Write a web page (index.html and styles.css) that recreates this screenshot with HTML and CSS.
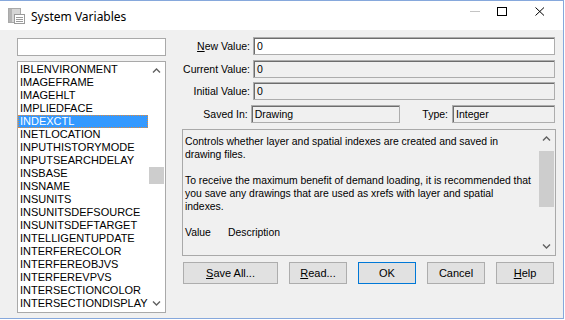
FILE: index.html
```html
<!DOCTYPE html>
<html lang="en">
<head>
  <meta charset="UTF-8" />
  <title>System Variables</title>
  <link rel="stylesheet" href="styles.css">
</head>
<body>
  <div class="window">
    <div class="titlebar">
      <svg class="app-icon" width="17" height="16" viewBox="0 0 17 16">
        <rect x="0.5" y="0.5" width="12" height="14" fill="#d6d6d6" stroke="#a9a9a9"/>
        <rect x="1" y="1" width="3" height="13" fill="#b4b4b4"/>
        <rect x="6.5" y="6.5" width="10" height="9" fill="#ffffff" stroke="#9a9a9a"/>
        <line x1="8" y1="9.5" x2="15" y2="9.5" stroke="#9a9a9a"/>
        <line x1="8" y1="11.5" x2="15" y2="11.5" stroke="#9a9a9a"/>
        <line x1="8" y1="13.5" x2="15" y2="13.5" stroke="#9a9a9a"/>
      </svg>
      <span class="title">System Variables</span>
      <div class="caption">
        <svg class="cap min" width="10" height="9" viewBox="0 0 10 9"><line x1="0" y1="4.5" x2="10" y2="4.5" stroke="#c4c4c4"/></svg>
        <svg class="cap max" width="10" height="9" viewBox="0 0 10 9"><rect x="0.5" y="0.5" width="9" height="8" fill="none" stroke="#000"/></svg>
        <svg class="cap close" width="10" height="9" viewBox="0 0 10 9"><path d="M0.5 0.5 L9 8.5 M9 0.5 L0.5 8.5" stroke="#000" fill="none"/></svg>
      </div>
    </div>

    <div class="dialog">
      <div class="left-col">
        <div class="search"></div>
        <div class="listbox">
          <ul class="items">
            <li>IBLENVIRONMENT</li>
            <li>IMAGEFRAME</li>
            <li>IMAGEHLT</li>
            <li>IMPLIEDFACE</li>
            <li class="selected">INDEXCTL</li>
            <li>INETLOCATION</li>
            <li>INPUTHISTORYMODE</li>
            <li>INPUTSEARCHDELAY</li>
            <li>INSBASE</li>
            <li>INSNAME</li>
            <li>INSUNITS</li>
            <li>INSUNITSDEFSOURCE</li>
            <li>INSUNITSDEFTARGET</li>
            <li>INTELLIGENTUPDATE</li>
            <li>INTERFERECOLOR</li>
            <li>INTERFEREOBJVS</li>
            <li>INTERFEREVPVS</li>
            <li>INTERSECTIONCOLOR</li>
            <li>INTERSECTIONDISPLAY</li>
          </ul>
          <div class="vscroll list-scroll">
            <div class="arrow"><svg width="9" height="5" viewBox="0 0 9 5"><path d="M1 4.5 L4.5 1 L8 4.5" stroke="#606060" stroke-width="1.4" fill="none"/></svg></div>
            <div class="track"><div class="thumb"></div></div>
            <div class="arrow"><svg width="9" height="5" viewBox="0 0 9 5"><path d="M1 0.5 L4.5 4 L8 0.5" stroke="#606060" stroke-width="1.4" fill="none"/></svg></div>
          </div>
        </div>
      </div>

      <div class="right-col">
        <div class="field-row">
          <span class="lbl"><u>N</u>ew Value:</span>
          <div class="edit editable">0</div>
        </div>
        <div class="field-row">
          <span class="lbl">Current Value:</span>
          <div class="edit">0</div>
        </div>
        <div class="field-row">
          <span class="lbl">Initial Value:</span>
          <div class="edit">0</div>
        </div>
        <div class="field-row">
          <span class="lbl">Saved In:</span>
          <div class="edit saved-in">Drawing</div>
          <span class="type-lbl">Type:</span>
          <div class="edit type-box">Integer</div>
        </div>

        <div class="desc">
          <div class="desc-text">
            <p>Controls whether layer and spatial indexes are created and saved in<br>drawing files.</p>
            <p>To receive the maximum benefit of demand loading, it is recommended that<br>you save any drawings that are used as xrefs with layer and spatial<br>indexes.</p>
            <p><span class="col-value">Value</span>Description</p>
          </div>
          <div class="vscroll desc-scroll">
            <div class="arrow"><svg width="9" height="5" viewBox="0 0 9 5"><path d="M1 4.5 L4.5 1 L8 4.5" stroke="#606060" stroke-width="1.4" fill="none"/></svg></div>
            <div class="track"><div class="thumb"></div></div>
            <div class="arrow"><svg width="9" height="5" viewBox="0 0 9 5"><path d="M1 0.5 L4.5 4 L8 0.5" stroke="#606060" stroke-width="1.4" fill="none"/></svg></div>
          </div>
        </div>

        <div class="buttons">
          <button class="btn save-all"><u>S</u>ave All...</button>
          <button class="btn"><u>R</u>ead...</button>
          <button class="btn default">OK</button>
          <button class="btn">Cancel</button>
          <button class="btn"><u>H</u>elp</button>
        </div>
      </div>
    </div>
  </div>
</body>
</html>
```

FILE: styles.css
```css
* { margin: 0; padding: 0; box-sizing: border-box; }

body {
  background: #ffffff;
  font-family: "Liberation Sans", Arial, sans-serif;
  font-size: 11px;
  color: #000;
}

.window {
  width: 564px;
  height: 319px;
  border-top: 1px solid #86a8dc;
  border-right: 1px solid #86a8dc;
  border-bottom: 1px solid #86a8dc;
  display: flex;
  flex-direction: column;
}

/* Title bar */
.titlebar {
  height: 29px;
  background: #ffffff;
  display: flex;
  align-items: center;
  padding-left: 8px;
}

.app-icon {
  margin-top: 1px;
}

.title {
  margin-left: 6px;
  font-family: "Noto Sans", "Open Sans", sans-serif;
  font-size: 12px;
  margin-top: 1px;
}

.caption {
  margin-left: auto;
  align-self: flex-start;
  margin-top: 6px;
  display: flex;
  padding-right: 18px;
}

.cap.max { margin-left: 17px; }
.cap.close { margin-left: 28px; }

/* Dialog body */
.dialog {
  flex: 1;
  background: #f0f0f0;
  display: flex;
  padding: 7px 0 0 17px;
}

.left-col {
  width: 149px;
  padding-top: 1px;
  display: flex;
  flex-direction: column;
  gap: 5px;
}

.search {
  height: 18px;
  background: #fff;
  border: 1px solid #a9a9a9;
}

.listbox {
  height: 252px;
  background: #fff;
  border: 1px solid #a9a9a9;
  display: flex;
}

.items {
  list-style: none;
  flex: 1;
  padding-top: 1px;
  font-size: 11px;
}

.items li {
  height: 13px;
  line-height: 13px;
  padding-left: 2px;
  white-space: nowrap;
}

.items li.selected {
  background: #3399ff;
  color: #fff;
  outline: 1px dotted #e08a3c;
  outline-offset: -1px;
}

.vscroll {
  width: 17px;
  display: flex;
  flex-direction: column;
}

.vscroll .arrow {
  height: 17px;
  display: flex;
  align-items: center;
  justify-content: center;
}

.vscroll .track {
  flex: 1;
}

.vscroll .thumb {
  background: #cdcdcd;
  margin: 0 1px;
}

.list-scroll .thumb {
  margin-top: 88px;
  height: 17px;
}

/* Right column */
.right-col {
  width: 374px;
  margin-left: 16px;
  display: flex;
  flex-direction: column;
}

.field-row {
  display: flex;
  align-items: center;
  height: 18px;
  margin-bottom: 4.5px;
}

.lbl {
  width: 68px;
  text-align: right;
  margin-right: 3px;
  white-space: nowrap;
  font-size: 10.5px;
}

.edit {
  flex: 1;
  height: 18px;
  line-height: 16px;
  padding-left: 3px;
  border: 1px solid #adadad;
  box-shadow: inset 1px 1px 0 #6d6d6d;
  background: #f0f0f0;
  font-size: 10.5px;
  margin-right: 1px;
}

.edit.editable { background: #fff; }

.edit.saved-in {
  flex: none;
  width: 149px;
  margin-right: 0;
}

.type-lbl {
  width: 50px;
  text-align: right;
  margin-right: 4px;
  font-size: 10.5px;
}

.edit.type-box {
  flex: none;
  width: 103px;
}

/* Description */
.desc {
  margin-top: 1.5px;
  height: 127px;
  border: 1px solid #a9a9a9;
  display: flex;
}

.desc-text {
  flex: 1;
  padding: 5px 0 0 2px;
  font-size: 10.4px;
  line-height: 13px;
  white-space: nowrap;
  overflow: hidden;
}

.desc-text p { margin-bottom: 13px; }

.col-value {
  display: inline-block;
  width: 43px;
}

.desc-scroll .thumb {
  margin-top: 4px;
  height: 56px;
}

/* Buttons */
.buttons {
  display: flex;
  gap: 11px;
  margin-top: 6px;
  padding-left: 1px;
}

.btn {
  width: 58px;
  height: 22px;
  background: #e1e1e1;
  border: 1px solid #adadad;
  font-family: "Liberation Sans", Arial, sans-serif;
  font-size: 11px;
  color: #000;
}

.btn.save-all { width: 95px; }

.btn.default { border-color: #0078d7; }
```
